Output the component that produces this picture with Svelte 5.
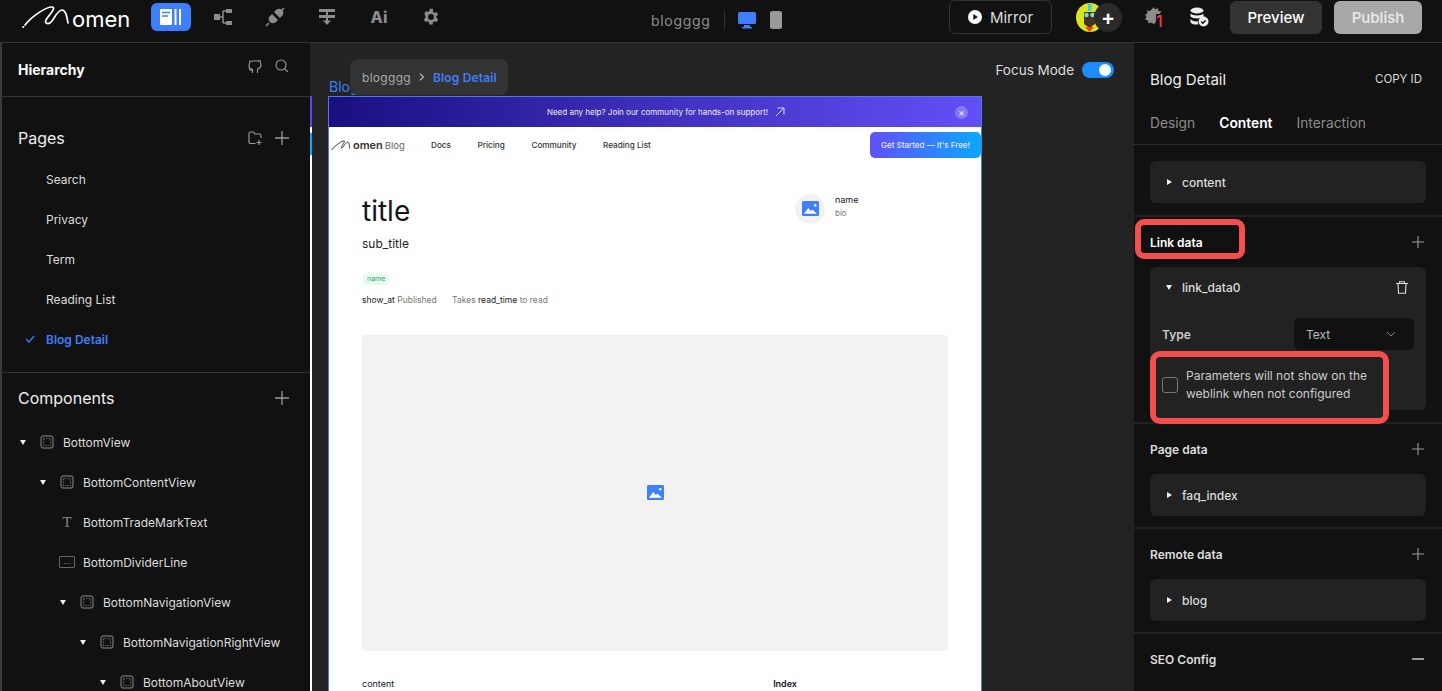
<script lang="ts">
    const tools = ["tree", "plug", "merge", "ai", "gear"];
    const pages = ["Search", "Privacy", "Term", "Reading List", "Blog Detail"];
    const nodes = [
        { name: "BottomView", depth: 0, kind: "view" },
        { name: "BottomContentView", depth: 1, kind: "view" },
        { name: "BottomTradeMarkText", depth: 2, kind: "text" },
        { name: "BottomDividerLine", depth: 2, kind: "line" },
        { name: "BottomNavigationView", depth: 2, kind: "view" },
        { name: "BottomNavigationRightView", depth: 3, kind: "view" },
        { name: "BottomAboutView", depth: 4, kind: "view" },
    ];
    const navLinks = ["Docs", "Pricing", "Community", "Reading List"];
</script>

{#snippet plus()}
    <svg class="plus" viewBox="0 0 14 14" width="14" height="14"><path d="M7 0v14M0 7h14" /></svg>
{/snippet}

{#snippet picture(size)}
    <svg viewBox="0 0 18 16" width={size} height={size * 16 / 18}>
        <rect width="18" height="16" rx="1.5" fill="#3f7ffb" />
        <path d="M2 13.5 6.6 7.5l2.7 3 1.6-1.6 4.9 4.6z" fill="#fff" />
        <circle cx="14" cy="4.6" r="1.3" fill="#fff" />
    </svg>
{/snippet}

{#snippet viewIcon()}
    <svg class="node-icon" viewBox="0 0 14 14" width="14" height="14">
        <rect x="1" y="1" width="12" height="12" rx="2.5" fill="none" stroke="#666" stroke-width="1.4" />
        <rect x="3.5" y="3.5" width="7" height="7" fill="none" stroke="#666" stroke-width="1.2" stroke-dasharray="1.4 1.2" />
    </svg>
{/snippet}

{#snippet caret()}
    <span class="caret"></span>
{/snippet}

<div class="app">
    <header class="topbar">
        <div class="logo">
            <svg viewBox="0 0 50 28" width="50" height="28">
                <path d="M3 22C10 13 24 4 30 4 35 4 27 12 24 17 22 21 27 22 30 18 33 14 36 7 40 7 44 7 45 14 46 20" fill="none" stroke="#fff" stroke-width="1.700" stroke-linecap="round" />
                <circle cx="1.300" cy="24" r="1.100" fill="#fff" />
            </svg>
            <span>omen</span>
        </div>
        <button class="tool active" aria-label="Pages">
            <svg viewBox="0 0 24 18" width="24" height="18">
                <rect x="1" y="1" width="12" height="16" rx="1" fill="#fff" />
                <path d="M3 4.500h8M3 8h6" stroke="#3f7ffb" stroke-width="1.500" />
                <path d="M16.500 1v16M21 1v16" stroke="#fff" stroke-width="2" />
            </svg>
        </button>
        <div class="tools">
            {#each tools as tool}
                <span class="tool-icon">
                    {#if tool === "tree"}
                        <svg viewBox="0 0 20 18" width="20" height="18" fill="#8c8c8c">
                            <rect x="1" y="6" width="6" height="6" /><rect x="13" y="1" width="6" height="4" /><rect x="13" y="13" width="6" height="4" />
                            <path d="M7 9h3M10 3h3M10 15h3M10 3v12" stroke="#8c8c8c" stroke-width="1.500" fill="none" />
                        </svg>
                    {:else if tool === "plug"}
                        <svg viewBox="0 0 20 20" width="20" height="20" fill="#8c8c8c">
                            <path d="M7 7l6 6-2 2a4 4 0 0 1-6 0 4 4 0 0 1 0-6z" /><path d="M9 5l2-2a4 4 0 0 1 6 0 4 4 0 0 1 0 6l-2 2z" />
                            <path d="M1 19l3-3M16 4l3-3" stroke="#8c8c8c" stroke-width="1.500" />
                        </svg>
                    {:else if tool === "merge"}
                        <svg viewBox="0 0 18 18" width="18" height="18" fill="#8c8c8c">
                            <rect x="1" y="1" width="16" height="3" /><rect x="1" y="7" width="16" height="3" />
                            <rect x="8" y="4" width="2" height="3" /><rect x="8" y="10" width="2" height="3" />
                            <path d="M5 12.500h8l-4 4.500z" />
                        </svg>
                    {:else if tool === "ai"}
                        <span class="ai">Ai</span>
                    {:else}
                        <svg viewBox="0 0 24 24" width="20" height="20" fill="#8c8c8c">
                            <path fill-rule="evenodd" d="M19.400 13c.1-.3.100-.7.100-1s0-.7-.1-1l2.100-1.600-2-3.500-2.500 1c-.5-.4-1.100-.7-1.700-1L15.500 2h-4l-.4 2.900c-.6.300-1.200.6-1.700 1l-2.500-1-2 3.500L6.500 11c0 .3-.1.700-.1 1s0 .7.1 1l-2.100 1.600 2 3.500 2.500-1c.5.400 1.100.7 1.700 1l.4 2.900h4l.4-2.900c.6-.3 1.200-.6 1.700-1l2.500 1 2-3.500zM13 15.500a3.500 3.500 0 1 1 0-7 3.500 3.500 0 0 1 0 7z" transform="translate(-1 0)" />
                        </svg>
                    {/if}
                </span>
            {/each}
        </div>

        <div class="project">
            <span class="project-name">blogggg</span>
            <span class="project-sep"></span>
            <svg viewBox="0 0 18 17" width="18" height="17" fill="#3f7ffb">
                <rect width="18" height="12" rx="1.500" /><rect x="6" y="13" width="6" height="2" /><rect x="4" y="15" width="10" height="1.500" />
            </svg>
            <span class="phone"></span>
        </div>

        <div class="actions">
            <button class="mirror">
                <svg viewBox="0 0 14 14" width="14" height="14"><circle cx="7" cy="7" r="7" fill="#fff" /><path d="M5.300 4v6l4.500-3z" fill="#111" /></svg>
                Mirror
            </button>
            <div class="avatar-group">
                <svg class="avatar" viewBox="0 0 28 29" width="28" height="29">
                    <ellipse cx="14" cy="14.500" rx="14" ry="14.500" fill="#d8e81a" />
                    <path d="M8 9h11v12l-5.500 4L8 21z" fill="#4a3020" />
                    <circle cx="10.500" cy="12" r="2.200" fill="#7fd8d0" /><circle cx="16.500" cy="12" r="2.200" fill="#7fd8d0" />
                    <path d="M12 1h3.500v7H12z" fill="#3fc8e8" /><path d="M9 24h9l-4.500 5z" fill="#e8401f" />
                </svg>
                <span class="avatar-add">+</span>
            </div>
            <span class="bug">
                <svg viewBox="0 0 18 20" width="18" height="20"><path d="M9 1l1 2.500 3-1.500.5 3 3 .5-2 2.500H11v8l-2 2-3-1.500-2.500 1-.5-3-3-1 1.500-2.500L0 8.500l2.500-1L2 4.500l3 .5z" fill="#8c8c8c" /></svg>
                <span class="bug-count">1</span>
            </span>
            <svg class="db" viewBox="0 0 20 20" width="20" height="20" fill="#eee">
                <ellipse cx="8" cy="3.500" rx="6.500" ry="3" /><path d="M1.500 6.500c2 2.500 11 2.500 13 0v3c-2 2.500-11 2.500-13 0zM1.500 12c2 2.500 6 2.500 7.500 2.500v3c-2 .3-6 0-7.500-2z" />
                <circle cx="14.500" cy="14.500" r="5" /><path d="M12.200 14.500l1.700 1.700 2.800-3" stroke="#111" stroke-width="1.300" fill="none" />
            </svg>
            <button class="preview">Preview</button>
            <button class="publish">Publish</button>
        </div>
    </header>

    <div class="body">
        <aside class="left">
            <div class="hierarchy">
                <strong>Hierarchy</strong>
                <div class="hierarchy-icons">
                    <svg viewBox="0 0 14 15" width="14" height="15" fill="none" stroke="#999" stroke-width="1.100">
                        <path d="M4.500 14v-2.500C2 12 1.500 10 1 9.500M9.500 14v-3c0-1 .3-1.200.5-1.500 2-.2 3-1.300 3-3.500 0-1-.3-1.800-.8-2.400.1-.8 0-1.600-.2-2.100-.7 0-1.500.4-2.100.8a8 8 0 0 0-5.800 0C3.500 2.400 2.700 2 2 2c-.2.500-.3 1.300-.2 2.100C1.300 4.700 1 5.500 1 6.500c0 2.200 1 3.300 3 3.500.2.300.5.600.5 1.500" />
                    </svg>
                    <svg viewBox="0 0 14 14" width="14" height="14" fill="none" stroke="#999" stroke-width="1.100"><circle cx="6" cy="6" r="5" /><path d="M9.800 9.800 13 13" /></svg>
                </div>
            </div>
            <section class="pages">
                <div class="section-head">
                    <span>Pages</span>
                    <div class="head-icons">
                        <svg viewBox="0 0 15 14" width="15" height="14" fill="none" stroke="#999" stroke-width="1.200">
                            <path d="M7.500 12.500H2.500a1.500 1.500 0 0 1-1.500-1.500V2.500A1.500 1.500 0 0 1 2.500 1h3l1.500 2h4.500A1.500 1.500 0 0 1 13 4.500V7M11 9v5M8.500 11.500h5" />
                        </svg>
                        {@render plus()}
                    </div>
                </div>
                <ul>
                    {#each pages as page}
                        <li class:current={page === "Blog Detail"}>
                            {#if page === "Blog Detail"}
                                <svg class="check" viewBox="0 0 10 8" width="10" height="8"><path d="M1 4l3 3 5-6" fill="none" stroke="#3f7ffb" stroke-width="1.300" /></svg>
                            {/if}
                            {page}
                        </li>
                    {/each}
                </ul>
            </section>
            <section class="components">
                <div class="section-head">
                    <span>Components</span>
                    <div class="head-icons">{@render plus()}</div>
                </div>
                <ul>
                    {#each nodes as node}
                        <li style={`--depth:${node.depth}`}>
                            {#if node.kind === "view"}
                                {@render caret()}
                                {@render viewIcon()}
                            {:else if node.kind === "text"}
                                <span class="glyph-t">T</span>
                            {:else}
                                <span class="glyph-line">...</span>
                            {/if}
                            <span>{node.name}</span>
                        </li>
                    {/each}
                </ul>
            </section>
        </aside>

        <main class="canvas">
            <span class="viewport-strip"></span>
            <span class="frame-label">Blog</span>
            <div class="breadcrumb">
                <span>blogggg</span>
                <svg viewBox="0 0 6 8" width="6" height="8"><path d="M1 .8 4.500 4 1 7.200" fill="none" stroke="#aaa" stroke-width="1.400" /></svg>
                <b>Blog Detail</b>
            </div>
            <div class="focus">
                <span>Focus Mode</span>
                <span class="switch"></span>
            </div>
            <div class="frame">
                <div class="banner">
                    <span>Need any help? Join our community for hands-on support!</span>
                    <svg viewBox="0 0 10 10" width="10" height="10"><path d="M1 9 9 1M2.500 1H9v6.500" fill="none" stroke="#fff" stroke-width=".8" /></svg>
                    <span class="banner-close">×</span>
                </div>
                <nav class="site-nav">
                    <div class="site-logo">
                        <svg viewBox="0 0 22 12" width="22" height="12"><path d="M.5 11C5 6 11 1.500 13 2 15 2.500 10 7 10.500 9c1 1 3.500-5 6-6 2 0 2 5 2 6.500" fill="none" stroke="#222" stroke-width=".9" /></svg>
                        <b>omen</b><span>Blog</span>
                    </div>
                    <div class="site-links">
                        {#each navLinks as link}
                            <span>{link}</span>
                        {/each}
                    </div>
                    <span class="cta">Get Started — It's Free!</span>
                </nav>
                <div class="article">
                    <div class="article-head">
                        <div>
                            <h1>title</h1>
                            <p class="sub">sub_title</p>
                            <span class="tag">name</span>
                            <p class="meta"><b>show_at</b> Published <span class="takes">Takes <b>read_time</b> to read</span></p>
                        </div>
                        <div class="author">
                            <span class="author-pic">{@render picture(17)}</span>
                            <div>
                                <p class="author-name">name</p>
                                <p class="author-bio">bio</p>
                            </div>
                        </div>
                    </div>
                    <div class="cover">{@render picture(17)}</div>
                    <div class="article-foot">
                        <span>content</span>
                        <b>Index</b>
                    </div>
                </div>
            </div>
        </main>

        <aside class="right">
            <div class="panel-head">
                <div class="panel-title">
                    <span>Blog Detail</span>
                    <small>COPY ID</small>
                </div>
                <div class="tabs">
                    <span>Design</span>
                    <b>Content</b>
                    <span>Interaction</span>
                </div>
            </div>

            <section class="group first">
                <div class="data-row">{@render caret()}<span>content</span></div>
            </section>

            <section class="group link">
                <div class="group-head">
                    <span class="link-title">Link data</span>
                    {@render plus()}
                </div>
                <div class="link-card">
                    <div class="link-card-head">
                        {@render caret()}
                        <span>link_data0</span>
                        <svg viewBox="0 0 12 13" width="12" height="13" fill="none" stroke="#ddd" stroke-width="1.100">
                            <path d="M0 2.500h12M3.500 2.500V.8h5v1.700M2 2.500l.5 9.800h7l.5-9.800" />
                        </svg>
                    </div>
                    <div class="type-row">
                        <b>Type</b>
                        <div class="select">
                            <span>Text</span>
                            <svg viewBox="0 0 10 6" width="10" height="6"><path d="M1 1l4 4 4-4" fill="none" stroke="#888" stroke-width="1" /></svg>
                        </div>
                    </div>
                    <div class="param-row">
                        <span class="checkbox"></span>
                        <p>Parameters will not show on the weblink when not configured</p>
                    </div>
                </div>
            </section>

            <section class="group">
                <div class="group-head"><span>Page data</span>{@render plus()}</div>
                <div class="data-row">{@render caret()}<span>faq_index</span></div>
            </section>

            <section class="group">
                <div class="group-head"><span>Remote data</span>{@render plus()}</div>
                <div class="data-row">{@render caret()}<span>blog</span></div>
            </section>

            <section class="group last">
                <div class="group-head"><span>SEO Config</span><span class="minus"></span></div>
            </section>
        </aside>
    </div>
</div>

<style>
    :global(body) {
        margin: 0;
        background: #111;
        overflow: hidden;
    }

    .app {
        width: 1442px;
        height: 691px;
        overflow: hidden;
        display: flex;
        flex-direction: column;
        background: #111;
        color: #eee;
        font-family: Inter, "Liberation Sans", sans-serif;
    }

    button {
        font-family: inherit;
        border: 0;
        padding: 0;
    }

    ul {
        list-style: none;
        margin: 0;
        padding: 0;
    }

    p,
    h1 {
        margin: 0;
    }

    .plus {
        flex: none;
        stroke: #999;
        stroke-width: 1.3;
        fill: none;
    }

    /* top bar */
    .topbar {
        height: 43px;
        flex: none;
        box-sizing: border-box;
        border-bottom: 1px solid #343434;
        display: flex;
        align-items: center;
        padding-left: 22px;
        position: relative;
    }

    .logo {
        width: 129px;
        flex: none;
        display: flex;
        align-items: center;
        height: 30px;
        margin-top: -8px;
    }

    .logo span {
        font-size: 22px;
        font-weight: 400;
        line-height: 26px;
        margin-top: 4px;
        color: #fff;
    }

    .tool {
        width: 40px;
        height: 28px;
        margin-top: -8px;
        border-radius: 6px;
        display: grid;
        place-items: center;
    }

    .tool.active {
        background: #3f7ffb;
    }

    .tools {
        display: flex;
        align-items: center;
        margin-top: -8px;
        margin-left: 6px;
    }

    .tool-icon {
        width: 52px;
        display: grid;
        place-items: center;
    }

    .ai {
        font-size: 16px;
        font-weight: 800;
        color: #8c8c8c;
    }

    .project {
        position: absolute;
        left: 651px;
        top: 11px;
        display: flex;
        align-items: center;
        gap: 9px;
    }

    .project-name {
        font-size: 14px;
        letter-spacing: 0.7px;
        color: #8e8e8e;
    }

    .project-sep {
        width: 1px;
        height: 18px;
        background: #333;
        margin: 0 4px;
    }

    .phone {
        width: 12px;
        height: 18px;
        background: #999;
        border-radius: 2px;
        margin-left: 5px;
    }

    .actions {
        margin-left: auto;
        display: flex;
        align-items: center;
        margin-top: -8px;
        padding-right: 4px;
    }

    .mirror {
        width: 103px;
        height: 34px;
        border: 1px solid #333;
        border-radius: 6px;
        background: transparent;
        color: #ddd;
        font-size: 15px;
        display: flex;
        align-items: center;
        justify-content: center;
        gap: 8px;
    }

    .avatar-group {
        margin-left: 24px;
        display: flex;
        align-items: center;
        width: 46px;
    }

    .avatar {
        flex: none;
    }

    .avatar-add {
        width: 28px;
        height: 29px;
        flex: none;
        border-radius: 50%;
        background: #2a2a2a;
        margin-left: -10px;
        z-index: 1;
        display: grid;
        place-items: center;
        color: #fff;
        font-size: 21px;
        font-weight: 600;
        line-height: 1;
    }

    .bug {
        position: relative;
        margin-left: 23px;
        display: block;
        width: 20px;
        height: 22px;
    }

    .bug-count {
        position: absolute;
        left: 11px;
        top: 7px;
        color: #ef3b3b;
        font-size: 16px;
        font-weight: 500;
        line-height: 17px;
    }

    .db {
        margin-left: 24px;
    }

    .preview,
    .publish {
        height: 33px;
        border-radius: 6px;
        color: #fff;
        font-size: 15px;
        font-weight: 500;
    }

    .preview {
        width: 92px;
        background: #333;
        margin-left: 21px;
    }

    .publish {
        width: 88px;
        background: #a8a8a8;
        margin-left: 12px;
        color: #ececec;
        margin-right: 16px;
    }

    .body {
        flex: 1;
        min-height: 0;
        display: flex;
    }

    /* left panel */
    .left {
        width: 310px;
        flex: none;
        box-sizing: border-box;
        border-left: 2px solid #3a3a3a;
        background: #111;
        z-index: 1;
    }

    .hierarchy {
        height: 54px;
        box-sizing: border-box;
        border-bottom: 1px solid #343434;
        display: flex;
        align-items: center;
        justify-content: space-between;
        padding: 0 21px 0 16px;
    }

    .hierarchy strong {
        font-size: 14px;
        font-weight: 700;
        color: #fff;
    }

    .hierarchy-icons {
        display: flex;
        gap: 13px;
        margin-top: -6px;
    }

    .pages {
        height: 276px;
        box-sizing: border-box;
        border-bottom: 1px solid #343434;
        padding-top: 30px;
    }

    .section-head {
        display: flex;
        align-items: center;
        justify-content: space-between;
        padding: 0 21px 0 16px;
        height: 22px;
        font-size: 16px;
        color: #eee;
    }

    .head-icons {
        display: flex;
        align-items: center;
        gap: 12px;
    }

    .pages ul {
        margin-top: 10px;
    }

    .pages li {
        height: 40px;
        padding-left: 44px;
        display: flex;
        align-items: center;
        position: relative;
        font-size: 12px;
        color: #ddd;
    }

    .pages li.current {
        color: #3f7ffb;
        font-weight: 600;
    }

    .check {
        position: absolute;
        left: 23px;
    }

    .components {
        padding-top: 14px;
    }

    .components ul {
        margin-top: 13px;
    }

    .components li {
        height: 40px;
        padding-left: calc(18px + var(--depth) * 20px);
        display: flex;
        align-items: center;
        font-size: 12px;
        color: #ddd;
    }

    .caret {
        width: 0;
        height: 0;
        flex: none;
        border-left: 3.500px solid transparent;
        border-right: 3.500px solid transparent;
        border-top: 5px solid #eee;
    }

    .node-icon {
        margin: 0 9px 0 14px;
        flex: none;
    }

    .glyph-t {
        width: 16px;
        margin: 0 8px 0 -1px;
        text-align: center;
        font-family: "Liberation Serif", serif;
        font-size: 15px;
        color: #888;
    }

    .glyph-line {
        width: 14px;
        height: 10px;
        margin: 0 8px 0 -1px;
        border: 1px solid #666;
        border-radius: 1px;
        font-size: 8px;
        line-height: 8px;
        text-align: center;
        color: #888;
    }

    /* canvas */
    .canvas {
        flex: 1;
        min-width: 0;
        position: relative;
        background: #232323;
        padding: 53px 0 0 18px;
        overflow: hidden;
    }

    .viewport-strip {
        position: absolute;
        left: 0;
        top: 53px;
        bottom: 0;
        width: 2px;
        background: linear-gradient(
            180deg,
            #5a48f0 0 31px,
            #fff 31px 37px,
            #0aa8ff 37px 59px,
            #fff 59px
        );
    }

    .frame-label {
        position: absolute;
        left: 19px;
        top: 35px;
        font-size: 14px;
        color: #3f7ffb;
    }

    .breadcrumb {
        position: absolute;
        left: 40px;
        top: 16px;
        height: 36px;
        width: 158px;
        box-sizing: border-box;
        border-radius: 8px;
        background: #333;
        display: flex;
        align-items: center;
        gap: 8px;
        padding: 0 0 0 12px;
        font-size: 12px;
        letter-spacing: 0.3px;
        color: #aaa;
        z-index: 2;
    }

    .breadcrumb b {
        font-weight: 600;
        letter-spacing: 0.15px;
        color: #3f7ffb;
    }

    .focus {
        position: absolute;
        right: 20px;
        top: 19px;
        display: flex;
        align-items: center;
        gap: 8px;
        font-size: 13.500px;
        color: #ddd;
    }

    .switch {
        width: 32px;
        height: 16px;
        border-radius: 8px;
        background: #1a8cff;
        position: relative;
    }

    .switch::after {
        content: "";
        position: absolute;
        right: 3px;
        top: 2px;
        width: 12px;
        height: 12px;
        border-radius: 50%;
        background: #fff;
    }

    .frame {
        width: 654px;
        box-sizing: border-box;
        border: 1px solid #4a7be8;
        background: #fff;
        color: #15151f;
    }

    .banner {
        height: 30px;
        padding-left: 22px;
        background: linear-gradient(90deg, #1a0f80, #6250f7);
        color: #eee;
        font-size: 8px;
        display: flex;
        align-items: center;
        justify-content: center;
        gap: 7px;
        position: relative;
    }

    .banner-close {
        position: absolute;
        right: 13px;
        top: 9px;
        width: 13px;
        height: 13px;
        border-radius: 50%;
        background: rgba(255, 255, 255, 0.25);
        text-align: center;
        font-size: 10px;
        line-height: 13px;
    }

    .site-nav {
        height: 36px;
        display: flex;
        align-items: center;
        position: relative;
    }

    .site-logo {
        margin-left: 2px;
        width: 100px;
        display: flex;
        align-items: center;
        font-size: 11px;
        color: #333;
    }

    .site-logo b {
        font-weight: 600;
        margin-right: 2px;
    }

    .site-logo span {
        color: #666;
        font-size: 9.500px;
        margin-top: 1px;
    }

    .site-links {
        display: flex;
        gap: 26.500px;
        font-size: 8.200px;
        font-weight: 500;
        color: #333;
    }

    .cta {
        position: absolute;
        right: 0;
        top: 5px;
        width: 111px;
        height: 26px;
        border-radius: 5px;
        background: linear-gradient(90deg, #6250f7, #0aa8ff);
        color: #e8e8ff;
        font-size: 8px;
        font-weight: 500;
        display: grid;
        place-items: center;
    }

    .article {
        padding: 0 33px 40px;
    }

    .article-head {
        height: 172px;
        display: flex;
        justify-content: space-between;
    }

    h1 {
        font-size: 28px;
        font-weight: 400;
        line-height: 32px;
        margin-top: 32px;
    }

    .sub {
        font-size: 12px;
        line-height: 14px;
        margin-top: 10px;
        color: #222;
    }

    .tag {
        display: inline-block;
        margin-top: 22px;
        padding: 0 5px;
        height: 12px;
        border-radius: 6px;
        background: #e9fbf1;
        color: #2fa86a;
        font-size: 7px;
        line-height: 12px;
    }

    .meta {
        margin-top: 10px;
        font-size: 8.500px;
        line-height: 10px;
        color: #777;
    }

    .meta b {
        font-weight: 400;
        color: #222;
    }

    .takes {
        margin-left: 13px;
    }

    .author {
        width: 153px;
        margin-top: 31px;
        display: flex;
        gap: 10px;
        align-items: flex-start;
        height: 32px;
    }

    .author-pic {
        width: 30px;
        height: 30px;
        flex: none;
        border-radius: 50%;
        background: #f2f2f2;
        display: grid;
        place-items: center;
    }

    .author-name {
        font-size: 9px;
        line-height: 12px;
    }

    .author-bio {
        font-size: 8px;
        line-height: 12px;
        margin-top: 1px;
        color: #777;
    }

    .cover {
        width: 586px;
        height: 316px;
        border-radius: 4px;
        background: #f2f2f2;
        display: grid;
        place-items: center;
    }

    .article-foot {
        display: flex;
        justify-content: space-between;
        width: 435px;
        margin-top: 27px;
        font-size: 9px;
    }

    .article-foot b {
        font-weight: 600;
    }

    /* right panel */
    .right {
        width: 308px;
        flex: none;
        background: #111;
        position: relative;
    }

    .panel-head {
        height: 102px;
        box-sizing: border-box;
        border-bottom: 1px solid #2c2c2c;
        padding: 0 20px 0 16px;
    }

    .panel-title {
        display: flex;
        align-items: center;
        justify-content: space-between;
        padding-top: 25px;
        height: 22px;
        font-size: 15px;
        color: #eee;
    }

    .panel-title small {
        font-size: 11.500px;
        color: #ddd;
    }

    .tabs {
        display: flex;
        gap: 24px;
        margin-top: 24.500px;
        font-size: 13.800px;
        color: #8c8c8c;
    }

    .tabs b {
        color: #fff;
        font-weight: 600;
    }

    .group {
        border-bottom: 2px solid #222;
        padding: 0 16px 11px;
        font-size: 12px;
    }

    .group.first {
        padding-top: 16px;
        padding-bottom: 12px;
    }

    .group.link {
        padding-bottom: 12px;
    }

    .group.last {
        border: 0;
    }

    .group-head {
        display: flex;
        align-items: center;
        justify-content: space-between;
        height: 50px;
        padding-right: 2px;
        font-weight: 600;
        color: #ddd;
    }

    .group-head .plus {
        width: 12px;
        height: 12px;
    }

    .link-title {
        position: relative;
        color: #fff;
    }

    /* red marks drawn over the panel, part of the annotated screenshot */
    .link-title::after {
        content: "";
        position: absolute;
        left: -15px;
        top: -16px;
        width: 110px;
        height: 40px;
        box-sizing: border-box;
        border: 6px solid #f44f4f;
        border-radius: 9px;
    }

    .data-row {
        height: 42px;
        border-radius: 6px;
        background: #222;
        display: flex;
        align-items: center;
        gap: 10px;
        padding-left: 17px;
        color: #ddd;
        font-weight: 500;
    }

    .data-row .caret {
        border: 0;
        width: 0;
        border-top: 3.500px solid transparent;
        border-bottom: 3.500px solid transparent;
        border-left: 5px solid #eee;
    }

    .link-card {
        height: 143px;
        border-radius: 6px;
        background: #222;
        position: relative;
    }

    .link-card-head {
        height: 41px;
        display: flex;
        align-items: center;
        gap: 10px;
        padding: 0 18px 0 16px;
        font-weight: 500;
        color: #ddd;
    }

    .link-card-head span:nth-child(2) {
        flex: 1;
    }

    .type-row {
        display: flex;
        align-items: center;
        justify-content: space-between;
        padding: 10px 12px 0;
    }

    .type-row b {
        font-weight: 600;
        color: #ccc;
    }

    .select {
        width: 120px;
        height: 32px;
        box-sizing: border-box;
        border-radius: 6px;
        background: #111;
        display: flex;
        align-items: center;
        justify-content: space-between;
        padding: 0 18px 0 12px;
        color: #bbb;
    }

    .param-row {
        position: absolute;
        left: 0;
        top: 84px;
        width: 239px;
        height: 73px;
        box-sizing: border-box;
        border: 6px solid #f44f4f;
        border-radius: 10px;
        background: #222;
        display: flex;
        align-items: center;
        gap: 8px;
        padding: 0 0 6px 6px;
        z-index: 1;
    }

    .checkbox {
        width: 16px;
        height: 16px;
        box-sizing: border-box;
        flex: none;
        border: 1px solid #777;
        border-radius: 3px;
    }

    .param-row p {
        font-size: 12px;
        line-height: 18px;
        color: #ccc;
    }

    .minus {
        width: 12px;
        height: 1.500px;
        background: #999;
    }
</style>
